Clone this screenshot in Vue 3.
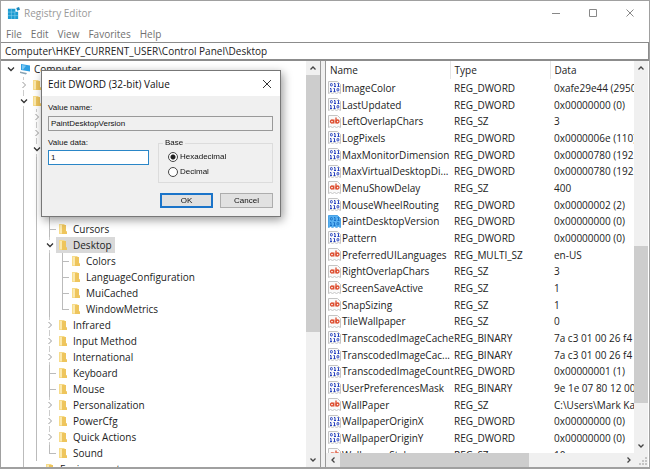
<script setup>
import { onMounted, ref } from 'vue'

const menus = ['File', 'Edit', 'View', 'Favorites', 'Help']
const address = ref('Computer\\HKEY_CURRENT_USER\\Control Panel\\Desktop')

// state: open | closed | leaf | last | none
const tree = [
  { level: 0, state: 'open', label: 'Computer' },
  { level: 1, state: 'closed', label: '', icon: true },
  { level: 1, state: 'open', label: '', icon: true },
  { level: 2, state: 'closed', label: '' },
  { level: 2, state: 'closed', label: '' },
  { level: 2, state: 'open', label: '' },
  { level: 3, state: 'closed', label: '' },
  { level: 3, state: 'leaf', label: '' },
  { level: 3, state: 'closed', label: '' },
  { level: 3, state: 'leaf', label: '' },
  { level: 3, state: 'leaf', label: 'Cursors' },
  { level: 3, state: 'open', label: 'Desktop', selected: true },
  { level: 4, state: 'leaf', label: 'Colors' },
  { level: 4, state: 'leaf', label: 'LanguageConfiguration' },
  { level: 4, state: 'leaf', label: 'MuiCached' },
  { level: 4, state: 'last', label: 'WindowMetrics' },
  { level: 3, state: 'closed', label: 'Infrared' },
  { level: 3, state: 'closed', label: 'Input Method' },
  { level: 3, state: 'closed', label: 'International' },
  { level: 3, state: 'leaf', label: 'Keyboard' },
  { level: 3, state: 'leaf', label: 'Mouse' },
  { level: 3, state: 'closed', label: 'Personalization' },
  { level: 3, state: 'closed', label: 'PowerCfg' },
  { level: 3, state: 'closed', label: 'Quick Actions' },
  { level: 3, state: 'last', label: 'Sound' },
  { level: 2, state: 'none', label: 'Environment' }
]

const D = 'REG_DWORD'
const S = 'REG_SZ'
const B = 'REG_BINARY'
const values = [
  ['ImageColor', D, '0xafe29e44 (2950'],
  ['LastUpdated', D, '0x00000000 (0)'],
  ['LeftOverlapChars', S, '3'],
  ['LogPixels', D, '0x0000006e (110)'],
  ['MaxMonitorDimension', D, '0x00000780 (192'],
  ['MaxVirtualDesktopDi...', D, '0x00000780 (192'],
  ['MenuShowDelay', S, '400'],
  ['MouseWheelRouting', D, '0x00000002 (2)'],
  ['PaintDesktopVersion', D, '0x00000000 (0)'],
  ['Pattern', D, '0x00000000 (0)'],
  ['PreferredUILanguages', 'REG_MULTI_SZ', 'en-US'],
  ['RightOverlapChars', S, '3'],
  ['ScreenSaveActive', S, '1'],
  ['SnapSizing', S, '1'],
  ['TileWallpaper', S, '0'],
  ['TranscodedImageCache', B, '7a c3 01 00 26 f4'],
  ['TranscodedImageCac...', B, '7a c3 01 00 26 f4'],
  ['TranscodedImageCount', D, '0x00000001 (1)'],
  ['UserPreferencesMask', B, '9e 1e 07 80 12 00'],
  ['WallPaper', S, 'C:\\Users\\Mark Kae'],
  ['WallpaperOriginX', D, '0x00000000 (0)'],
  ['WallpaperOriginY', D, '0x00000000 (0)'],
  ['WallpaperStyle', S, '10']
].map(([name, type, data]) => ({
  name, type, data,
  text: type === S || type === 'REG_MULTI_SZ',
  selected: name === 'PaintDesktopVersion'
}))

const valueName = ref('PaintDesktopVersion')
const valueData = ref('1')
const base = ref('hex')
const dataInput = ref(null)

onMounted(() => {
  dataInput.value.focus()
  dataInput.value.setSelectionRange(1, 1)
})
</script>

<template>
  <div class="window">
    <header class="titlebar">
      <svg class="app-icon" viewBox="0 0 14 14">
        <path fill="#1d9bd1" d="M1 2h8v3h3v8H1z" />
        <path fill="#1687bd" d="M10 1l3-1 1 3-3 1z" />
        <path stroke="#8fd4f0" stroke-width=".6" fill="none" d="M1 5.500h8M1 9.300h11M4.700 2v11M8.500 5v8" />
      </svg>
      <h1>Registry Editor</h1>
      <div class="caption-buttons">
        <button type="button" aria-label="Minimize"><svg viewBox="0 0 10 10"><path d="M1 5.500h8" /></svg></button>
        <button type="button" aria-label="Maximize"><svg viewBox="0 0 10 10"><path d="M1.500 1.500h7v7h-7z" /></svg></button>
        <button type="button" aria-label="Close"><svg viewBox="0 0 10 10"><path d="M1.500 1.500l7 7M8.500 1.500l-7 7" /></svg></button>
      </div>
    </header>

    <nav class="menubar">
      <button v-for="m in menus" :key="m" type="button">{{ m }}</button>
    </nav>

    <input v-model="address" class="address" type="text" aria-label="Address" spellcheck="false">

    <main class="panes">
      <section class="tree-pane">
        <ul class="tree">
          <li v-for="(n, i) in tree" :key="i" class="node">
            <span v-for="k in n.level" :key="k" class="slot" :class="{ line: k > 1 }"></span>
            <span class="slot own" :class="[n.state, { root: n.level === 0 }]">
              <svg v-if="n.state === 'open'" viewBox="0 0 8 8"><path class="dark" d="M1 2.500l3 3 3-3" /></svg>
              <svg v-else-if="n.state === 'closed'" viewBox="0 0 8 8"><path class="light" d="M2.500 1l3 3-3 3" /></svg>
            </span>
            <span v-if="n.label || n.icon" class="item" :class="{ selected: n.selected }">
              <svg v-if="n.level === 0" class="pc" viewBox="0 0 12 12">
                <path fill="#2d9fe3" d="M2 1l9 1.500v6L2 7z" />
                <path fill="#7cc8f3" d="M3 2l4 .7-3 4L3 6.500z" />
                <path fill="#8aa3b3" d="M1 8.500l7 1.500-1 1.500-6-1.500z" />
              </svg>
              <svg v-else class="folder" viewBox="0 0 10 12">
                <path fill="#f7dc8b" d="M1 1h5l1 1v9H1z" />
                <path fill="#eec55d" d="M4 2h4v6l1 .5V11H4z" />
                <path fill="#fbe9ae" d="M2 2h2v8H2z" />
              </svg>
              <span>{{ n.label }}</span>
            </span>
          </li>
        </ul>
        <div class="vscroll">
          <svg viewBox="0 0 8 8"><path d="M1.500 5.500L4 3l2.500 2.500" /></svg>
          <div class="track tree-track"><div class="thumb"></div></div>
          <svg viewBox="0 0 8 8"><path d="M1.500 2.500L4 5l2.500-2.500" /></svg>
        </div>
      </section>

      <section class="value-pane">
        <div class="value-main">
          <div class="value-list">
            <table>
              <colgroup><col class="c-name"><col class="c-type"><col></colgroup>
              <thead>
                <tr><th>Name</th><th>Type</th><th>Data</th></tr>
              </thead>
              <tbody>
                <tr v-for="v in values" :key="v.name" :class="{ chosen: v.selected }">
                  <td>
                    <div class="name">
                      <svg viewBox="0 0 13 13">
                        <path class="paper" d="M.5.500h9l3 3v9l-2-1-2 1-2-1-2 1-2-1-2 1z" />
                        <g v-if="v.text" class="ab">
                          <circle cx="4" cy="6.500" r="1.500" /><path d="M5.800 4.500v4M8 2.500v6" /><circle cx="9.500" cy="6.500" r="1.500" />
                        </g>
                        <g v-else class="bits">
                          <rect x="2.500" y="2.500" width="1.800" height="2.500" rx=".8" />
                          <path d="M6 2.500h1v2.800M9.500 2.500h1v2.800M6 5.500h2M9.500 5.500h2" />
                          <path d="M2 7.500h1v2.800M5.500 7.500h1v2.800M2 10.500h2M5.500 10.500h2" />
                          <rect x="9" y="7.500" width="1.800" height="2.500" rx=".8" />
                        </g>
                      </svg>
                      <span>{{ v.name }}</span>
                    </div>
                  </td>
                  <td>{{ v.type }}</td>
                  <td>{{ v.data }}</td>
                </tr>
              </tbody>
            </table>
          </div>
          <div class="vscroll">
            <svg viewBox="0 0 8 8"><path d="M1.500 5.500L4 3l2.500 2.500" /></svg>
            <div class="track value-track"><div class="thumb"></div></div>
            <svg viewBox="0 0 8 8"><path d="M1.500 2.500L4 5l2.500-2.500" /></svg>
          </div>
        </div>
        <div class="hscroll">
          <svg viewBox="0 0 8 8"><path d="M5.500 1.500L3 4l2.500 2.500" /></svg>
          <div class="track"><div class="thumb"></div></div>
          <svg viewBox="0 0 8 8"><path d="M2.500 1.500L5 4 2.500 6.500" /></svg>
          <svg class="grip" viewBox="0 0 12 12"><path d="M9 3h2v2H9zM9 6h2v2H9zM6 6h2v2H6zM9 9h2v2H9zM6 9h2v2H6zM3 9h2v2H3z" /></svg>
        </div>
      </section>
    </main>

    <form class="dialog" role="dialog" aria-labelledby="dialog-title" @submit.prevent>
      <div class="dialog-title">
        <h2 id="dialog-title">Edit DWORD (32-bit) Value</h2>
        <button type="button" aria-label="Close"><svg viewBox="0 0 10 10"><path d="M1 1l8 8M9 1L1 9" /></svg></button>
      </div>
      <div class="dialog-body">
        <label for="value-name">Value name:</label>
        <input id="value-name" v-model="valueName" class="readonly" type="text" readonly>
        <div class="columns">
          <div class="data">
            <label for="value-data">Value data:</label>
            <div class="field">
              <input id="value-data" ref="dataInput" v-model="valueData" type="text">
            </div>
          </div>
          <fieldset>
            <legend>Base</legend>
            <label><input v-model="base" type="radio" name="base" value="hex">Hexadecimal</label>
            <label><input v-model="base" type="radio" name="base" value="dec">Decimal</label>
          </fieldset>
        </div>
        <div class="actions">
          <button class="primary" type="submit">OK</button>
          <button type="button">Cancel</button>
        </div>
      </div>
    </form>
  </div>
</template>

<style>
body {
  background: #fff;
  overflow: hidden;
}
</style>

<style scoped>
* {
  box-sizing: border-box;
}
button,
input {
  font: inherit;
  color: inherit;
  margin: 0;
  padding: 0;
  border: 0;
  outline: 0;
  background: none;
}
svg {
  display: block;
  flex: none;
}
.window {
  position: relative;
  display: flex;
  flex-direction: column;
  height: 100vh;
  border: 1px solid #a0a0a0;
  border-bottom-width: 2px;
  font: 10px/16px "Open Sans", "Noto Sans", sans-serif;
  color: #222;
  background: #fff;
}
.titlebar {
  display: flex;
  align-items: center;
  height: 24px;
  padding: 0 14px 0 6px;
  color: #999;
}
.app-icon {
  width: 13px;
  height: 13px;
}
h1,
h2 {
  margin: 0;
  font-size: 10px;
  font-weight: 400;
}
h1 {
  margin-left: 4px;
}
.caption-buttons {
  display: flex;
  gap: 27px;
  margin-left: auto;
}
.caption-buttons svg,
.dialog-title svg {
  width: 10px;
  height: 10px;
  fill: none;
  stroke: #888;
}
.menubar {
  display: flex;
  gap: 9px;
  height: 17px;
  padding-left: 5px;
  color: #707070;
}
.address {
  height: 19px;
  flex: none;
  padding: 0 4px;
  border: solid #8c8c8c;
  border-width: 1px 1px 2px 0;
}
.panes {
  display: grid;
  grid-template-columns: 320fr 328fr;
  grid-template-rows: minmax(0, 1fr);
  flex: 1;
  min-height: 0;
  background: #fff;
}
.tree-pane {
  display: flex;
  min-width: 0;
  border-right: 1px solid #999;
}
.tree {
  flex: 1;
  min-width: 0;
  margin: 0;
  padding: 0 0 0 3px;
  overflow: hidden;
  list-style: none;
}
.node {
  display: flex;
  height: 16px;
}
.slot {
  display: grid;
  place-items: center;
  flex: 0 0 13px;
  height: 16px;
}
.line {
  background: linear-gradient(#bbb, #bbb) 6px 0 / 1px 100% no-repeat;
}
.leaf {
  background:
    linear-gradient(#bbb, #bbb) 6px 0 / 1px 100% no-repeat,
    linear-gradient(#bbb, #bbb) 6px 8px / 7px 1px no-repeat;
}
.last {
  background:
    linear-gradient(#bbb, #bbb) 6px 0 / 1px 8px no-repeat,
    linear-gradient(#bbb, #bbb) 6px 8px / 7px 1px no-repeat;
}
.open:not(.root),
.closed {
  background:
    linear-gradient(#ccc, #ccc) 6px 0 / 1px 3px no-repeat,
    linear-gradient(#ccc, #ccc) 6px 13px / 1px 3px no-repeat;
}
.own svg {
  width: 8px;
  height: 8px;
  fill: none;
}
.dark {
  stroke: #333;
  stroke-width: 1.300;
}
.light {
  stroke: #999;
}
.item {
  display: flex;
  align-items: center;
  padding: 0 3px 0 2px;
  white-space: nowrap;
}
.item.selected {
  background: #d9d9d9;
}
.pc {
  width: 12px;
  height: 12px;
  margin-right: 3px;
}
.folder {
  width: 10px;
  height: 12px;
  margin-right: 5px;
}
.vscroll {
  display: flex;
  flex-direction: column;
  flex: 0 0 13px;
  align-items: center;
  background: #f0f0f0;
}
.vscroll > svg,
.hscroll > svg {
  width: 8px;
  height: 8px;
  margin: 3px;
  fill: none;
  stroke: #444;
  stroke-width: 1.300;
}
.track {
  display: grid;
  flex: 1;
  align-self: stretch;
}
.thumb {
  background: #cdcdcd;
}
.tree-track {
  grid-template-rows: 68fr 32fr;
}
.value-track {
  grid-template-rows: 47fr 43fr 10fr;
}
.value-track .thumb {
  grid-row: 2;
}
.value-pane {
  display: flex;
  flex-direction: column;
  min-width: 0;
  margin-left: 4px;
  padding-right: 1px;
  border-left: 1px solid #999;
  box-shadow: -4px 0 #f0f0f0;
}
.value-main {
  display: flex;
  flex: 1;
  min-height: 0;
}
.value-list {
  flex: 1;
  min-width: 0;
  overflow: hidden;
}
table {
  width: 100%;
  table-layout: fixed;
  border-collapse: collapse;
}
.c-name {
  width: 124px;
}
.c-type {
  width: 100px;
}
th,
td {
  padding: 0 0 0 4px;
  font-weight: 400;
  text-align: left;
  white-space: nowrap;
  overflow: hidden;
  line-height: 16px;
}
th {
  height: 18px;
  border-right: 1px solid #e5e5e5;
}
th:last-child {
  border-right: 0;
}
td {
  height: 17px;
}
tr:nth-child(3n) td {
  height: 16px;
}
td:first-child {
  padding-left: 2px;
  overflow: visible;
}
.name {
  display: flex;
  align-items: center;
  gap: 1px;
}
.name svg {
  width: 13px;
  height: 13px;
}
.paper {
  fill: #fafafa;
  stroke: #c4c4c4;
}
.ab {
  fill: none;
  stroke: #dd4a2c;
  stroke-width: 1.300;
}
.bits {
  fill: none;
  stroke: #2440c0;
  stroke-width: 1;
}
.chosen .paper {
  fill: #58b1f2;
  stroke: #4aa3e6;
}
.chosen .bits {
  stroke: #1a73c9;
}
.hscroll {
  display: flex;
  flex: 0 0 13px;
  align-items: center;
  background: #f0f0f0;
}
.hscroll .track {
  grid-template-columns: 67fr 33fr;
}
.hscroll > .grip {
  width: 12px;
  height: 12px;
  margin: 0;
  fill: #c4c4c4;
  stroke: none;
}
.dialog {
  position: absolute;
  left: 40px;
  top: 69px;
  width: 240px;
  border: 1px solid #777;
  background: #f0f0f0;
  box-shadow: 2px 3px 9px rgba(0, 0, 0, 0.4);
  font: 8px/12px "Liberation Sans", Arial, sans-serif;
  color: #111;
}
.dialog-title {
  display: flex;
  align-items: center;
  justify-content: space-between;
  height: 25px;
  padding: 0 8px 0 6px;
  background: #fff;
  font: 10px/16px "Open Sans", "Noto Sans", sans-serif;
}
.dialog-title svg {
  stroke: #333;
}
.dialog-body {
  display: flex;
  flex-direction: column;
  padding: 6px 7px 8px 6px;
}
.dialog input[type="text"] {
  width: 100%;
  height: 15px;
  padding: 0 2px;
  border: 1px solid #999;
  background: #fff;
}
.dialog .readonly[type="text"] {
  margin-top: 2px;
  background: #f0f0f0;
}
.columns {
  display: flex;
  justify-content: space-between;
  gap: 9px;
  margin-top: 6px;
}
.data {
  flex: 0 0 101px;
}
.field {
  display: flex;
  margin-top: 1px;
}
.dialog .field input {
  border-color: #2a86c7;
}
fieldset {
  flex: 1;
  display: flex;
  flex-direction: column;
  min-width: 0;
  margin: 0;
  padding: 0 9px 3px;
  border: 1px solid #dcdcdc;
}
legend {
  margin-left: -5px;
  padding: 0 2px;
}
fieldset label {
  display: flex;
  align-items: center;
  gap: 2px;
  height: 15px;
}
input[type="radio"] {
  appearance: none;
  width: 10px;
  height: 10px;
  border: 1px solid #444;
  border-radius: 50%;
  background: #fff;
}
input[type="radio"]:checked {
  background: radial-gradient(circle, #222 0 2px, #fff 3px);
}
.actions {
  display: flex;
  justify-content: flex-end;
  gap: 7px;
  margin-top: 10px;
}
.actions button {
  width: 53px;
  height: 15px;
  border: 1px solid #adadad;
  background: #e1e1e1;
}
.actions .primary {
  border: 2px solid #1b74c9;
}
</style>
